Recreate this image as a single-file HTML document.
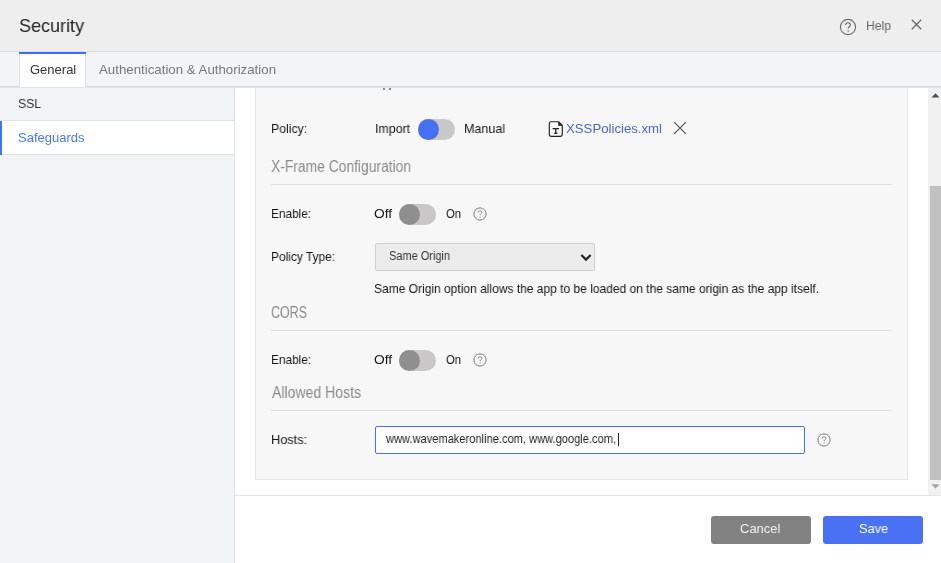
<!DOCTYPE html>
<html><head><meta charset="utf-8"><style>
html,body{margin:0;padding:0;width:941px;height:563px;overflow:hidden;background:#fff}
body{position:relative;font-family:"Liberation Sans",sans-serif}
.t{position:absolute;white-space:nowrap;transform-origin:0 0;will-change:transform}
</style></head><body>
<div style="position:absolute;left:0px;top:0px;width:941px;height:51px;background:#eeeeee"></div>
<div style="position:absolute;left:0px;top:51px;width:941px;height:1px;background:#dadada"></div>
<div id="security" class="t" style="left:19.000px;top:16px;font-size:19px;line-height:19px;color:#222;transform:scaleX(0.94732)">Security</div>
<svg style="position:absolute;left:838px;top:17px" width="20" height="20" viewBox="0 0 20 20"><circle cx="10" cy="10" r="7.6" fill="none" stroke="#6a6a6a" stroke-width="1.1"/><path d="M7.6 8.1 C7.6 6.6 8.7 5.7 10 5.7 C11.4 5.7 12.4 6.6 12.4 7.9 C12.4 9.4 10.2 9.7 10.2 11.6" fill="none" stroke="#6a6a6a" stroke-width="1.1"/><circle cx="10.2" cy="13.9" r="0.75" fill="#6a6a6a"/></svg>
<div id="help" class="t" style="left:866.000px;top:19px;font-size:13px;line-height:13px;color:#666;transform:scaleX(0.93672)">Help</div>
<svg style="position:absolute;left:911px;top:19px" width="11" height="11" viewBox="0 0 11 11"><path d="M0.8 0.8 L10.2 10.2 M10.2 0.8 L0.8 10.2" stroke="#666" stroke-width="1.3"/></svg>
<div style="position:absolute;left:0px;top:52px;width:941px;height:34px;background:#f3f4f6"></div>
<div style="position:absolute;left:0px;top:86px;width:941px;height:1px;background:#dadada"></div>
<div style="position:absolute;left:0px;top:87px;width:941px;height:1px;background:#e0e5e9"></div>
<div style="position:absolute;left:19px;top:52px;width:67px;height:35px;background:#fff;box-sizing:border-box;border-left:1px solid #e2e2e2;border-right:1px solid #e2e2e2"></div>
<div style="position:absolute;left:19px;top:52px;width:67px;height:2px;background:#3d6cf2"></div>
<div id="general" class="t" style="left:30.000px;top:63px;font-size:13px;line-height:13px;color:#333;transform:scaleX(0.99675)">General</div>
<div id="auth" class="t" style="left:99.000px;top:63px;font-size:13px;line-height:13px;color:#777;transform:scaleX(1.02056)">Authentication &amp; Authorization</div>
<div style="position:absolute;left:0px;top:88px;width:234px;height:475px;background:#f2f3f5"></div>
<div style="position:absolute;left:234px;top:88px;width:1px;height:475px;background:#dde2e6"></div>
<div style="position:absolute;left:0px;top:120px;width:234px;height:1px;background:#dde3e8"></div>
<div style="position:absolute;left:0px;top:121px;width:234px;height:33px;background:#fff"></div>
<div style="position:absolute;left:0px;top:154px;width:234px;height:1px;background:#dde3e8"></div>
<div style="position:absolute;left:0px;top:121px;width:2px;height:34px;background:#3e76f0"></div>
<div id="ssl" class="t" style="left:18.000px;top:97px;font-size:13px;line-height:13px;color:#333;transform:scaleX(0.93796)">SSL</div>
<div id="safeguards" class="t" style="left:18.000px;top:131px;font-size:13px;line-height:13px;color:#4a7af0;transform:scaleX(0.99291)">Safeguards</div>
<div style="position:absolute;left:235px;top:88px;width:706px;height:407px;background:#fff"></div>
<div style="position:absolute;left:255px;top:88px;width:653px;height:392px;background:#f7f7f7;box-sizing:border-box;border:1px solid #e6e6e6;border-top:none"></div>
<div style="position:absolute;left:383px;top:88px;width:2px;height:2px;background:#666;border-radius:1px"></div>
<div style="position:absolute;left:389px;top:88px;width:2px;height:2px;background:#666;border-radius:1px"></div>
<div id="policy" class="t" style="left:271.000px;top:122px;font-size:13px;line-height:13px;color:#161616;transform:scaleX(0.94348)">Policy:</div>
<div id="import" class="t" style="left:375.000px;top:122px;font-size:13px;line-height:13px;color:#161616;transform:scaleX(0.95091)">Import</div>
<div style="position:absolute;left:418px;top:119px;width:37px;height:21px;background:#c9c7c8;border-radius:11px"></div>
<div style="position:absolute;left:418px;top:119px;width:21px;height:21px;background:#4570f2;border-radius:50%"></div>
<div id="manual" class="t" style="left:464.000px;top:122px;font-size:13px;line-height:13px;color:#161616;transform:scaleX(0.96421)">Manual</div>
<svg style="position:absolute;left:548.4px;top:120px" width="16" height="18" viewBox="0 0 16 18"><path d="M3 1.7 H10.6 L14.3 5.4 V14.6 Q14.3 16.3 12.6 16.3 H3 Q1.3 16.3 1.3 14.6 V3.4 Q1.3 1.7 3 1.7 Z" fill="none" stroke="#222" stroke-width="1.15" stroke-linejoin="round"/><path d="M10.6 2 V5.4 H14" fill="#222" stroke="#222" stroke-width="0.8"/><path d="M4.6 8.6 H11 M7.8 8.6 V13.2 M6.2 13.3 H9.4" stroke="#222" stroke-width="1.3"/></svg>
<div id="xss" class="t" style="left:566.000px;top:122px;font-size:13px;line-height:13px;color:#4768c8;transform:scaleX(1.01485)">XSSPolicies.xml</div>
<svg style="position:absolute;left:673px;top:121px" width="14" height="14" viewBox="0 0 14 14"><path d="M1.2 1.2 L12.8 12.8 M12.8 1.2 L1.2 12.8" stroke="#555" stroke-width="1.2"/></svg>
<div id="xframe" class="t" style="left:271.000px;top:159px;font-size:16px;line-height:16px;color:#8a8a8a;transform:scaleX(0.86523)">X-Frame Configuration</div>
<div style="position:absolute;left:271px;top:184px;width:621px;height:1px;background:#e0e0e0"></div>
<div id="enable1" class="t" style="left:271.000px;top:207px;font-size:13px;line-height:13px;color:#161616;transform:scaleX(0.90979)">Enable:</div>
<div id="off1" class="t" style="left:374.000px;top:207px;font-size:13px;line-height:13px;color:#161616;transform:scaleX(1.05634)">Off</div>
<div id="on1" class="t" style="left:446.000px;top:207px;font-size:13px;line-height:13px;color:#161616;transform:scaleX(0.86945)">On</div>
<div style="position:absolute;left:399px;top:204px;width:37px;height:21px;background:#c9c7c8;border-radius:11px"></div>
<div style="position:absolute;left:399px;top:204px;width:21px;height:21px;background:#8f8f8f;border-radius:50%"></div>
<svg style="position:absolute;left:471.9px;top:206.4px" width="16" height="16" viewBox="0 0 16 16"><circle cx="8" cy="8" r="6.1" fill="none" stroke="#7a7a7a" stroke-width="1"/><path d="M6.1 6.6 C6.1 5.4 7 4.7 8 4.7 C9.1 4.7 9.9 5.4 9.9 6.4 C9.9 7.6 8.1 7.8 8.1 9.3" fill="none" stroke="#7a7a7a" stroke-width="0.95"/><circle cx="8.1" cy="11.1" r="0.6" fill="#7a7a7a"/></svg>
<div id="ptype" class="t" style="left:271.000px;top:250px;font-size:13px;line-height:13px;color:#161616;transform:scaleX(0.91725)">Policy Type:</div>
<div style="position:absolute;left:375px;top:243px;width:220px;height:28px;background:#ececec;box-sizing:border-box;border:1px solid #cfcfcf;border-radius:2px"></div>
<div id="selval" class="t" style="left:389.000px;top:250px;font-size:12px;line-height:12px;color:#333;transform:scaleX(0.91496)">Same Origin</div>
<svg style="position:absolute;left:580px;top:253px" width="12" height="9" viewBox="0 0 12 9"><path d="M1.4 2 L6 6.6 L10.6 2" fill="none" stroke="#222" stroke-width="2.2"/></svg>
<div id="desc" class="t" style="left:374.000px;top:282px;font-size:13px;line-height:13px;color:#161616;transform:scaleX(0.92328)">Same Origin option allows the app to be loaded on the same origin as the app itself.</div>
<div id="cors" class="t" style="left:271.000px;top:305px;font-size:16px;line-height:16px;color:#8a8a8a;transform:scaleX(0.77939)">CORS</div>
<div style="position:absolute;left:271px;top:330px;width:621px;height:1px;background:#e0e0e0"></div>
<div id="enable2" class="t" style="left:271.000px;top:353px;font-size:13px;line-height:13px;color:#161616;transform:scaleX(0.90979)">Enable:</div>
<div id="off2" class="t" style="left:374.000px;top:353px;font-size:13px;line-height:13px;color:#161616;transform:scaleX(1.05634)">Off</div>
<div id="on2" class="t" style="left:446.000px;top:353px;font-size:13px;line-height:13px;color:#161616;transform:scaleX(0.86945)">On</div>
<div style="position:absolute;left:399px;top:350px;width:37px;height:21px;background:#c9c7c8;border-radius:11px"></div>
<div style="position:absolute;left:399px;top:350px;width:21px;height:21px;background:#8f8f8f;border-radius:50%"></div>
<svg style="position:absolute;left:471.9px;top:352.4px" width="16" height="16" viewBox="0 0 16 16"><circle cx="8" cy="8" r="6.1" fill="none" stroke="#7a7a7a" stroke-width="1"/><path d="M6.1 6.6 C6.1 5.4 7 4.7 8 4.7 C9.1 4.7 9.9 5.4 9.9 6.4 C9.9 7.6 8.1 7.8 8.1 9.3" fill="none" stroke="#7a7a7a" stroke-width="0.95"/><circle cx="8.1" cy="11.1" r="0.6" fill="#7a7a7a"/></svg>
<div id="allowed" class="t" style="left:272.000px;top:385px;font-size:16px;line-height:16px;color:#8a8a8a;transform:scaleX(0.87795)">Allowed Hosts</div>
<div style="position:absolute;left:271px;top:410px;width:621px;height:1px;background:#e0e0e0"></div>
<div id="hosts" class="t" style="left:271.000px;top:433px;font-size:13px;line-height:13px;color:#161616;transform:scaleX(0.98057)">Hosts:</div>
<div style="position:absolute;left:375px;top:426px;width:430px;height:28px;background:#fff;box-sizing:border-box;border:1px solid #4b72e0;border-radius:2px"></div>
<div id="hostval" class="t" style="left:386.000px;top:433px;font-size:12px;line-height:12px;color:#222;transform:scaleX(0.92462)">www.wavemakeronline.com, www.google.com,</div>
<div style="position:absolute;left:618px;top:433px;width:1px;height:13px;background:#222"></div>
<svg style="position:absolute;left:815.8px;top:431.7px" width="16" height="16" viewBox="0 0 16 16"><circle cx="8" cy="8" r="6.1" fill="none" stroke="#7a7a7a" stroke-width="1"/><path d="M6.1 6.6 C6.1 5.4 7 4.7 8 4.7 C9.1 4.7 9.9 5.4 9.9 6.4 C9.9 7.6 8.1 7.8 8.1 9.3" fill="none" stroke="#7a7a7a" stroke-width="0.95"/><circle cx="8.1" cy="11.1" r="0.6" fill="#7a7a7a"/></svg>
<div style="position:absolute;left:928px;top:88px;width:13px;height:407px;background:#f1f1f1"></div>
<div style="position:absolute;left:930px;top:186px;width:11px;height:294px;background:#c1c1c1"></div>
<svg style="position:absolute;left:931px;top:92px" width="9" height="7" viewBox="0 0 9 7"><path d="M0.5 5.6 L4.5 1.2 L8.5 5.6 Z" fill="#505050"/></svg>
<svg style="position:absolute;left:931px;top:483px" width="9" height="7" viewBox="0 0 9 7"><path d="M0.5 1.2 L4.5 5.6 L8.5 1.2 Z" fill="#a3a3a3"/></svg>
<div style="position:absolute;left:235px;top:495px;width:706px;height:1px;background:#dfe5e8"></div>
<div style="position:absolute;left:235px;top:496px;width:706px;height:67px;background:#fff"></div>
<div style="position:absolute;left:711px;top:516px;width:100px;height:28px;background:#828282;border-radius:3px"></div>
<div id="cancel" class="t" style="left:740.000px;top:522px;font-size:13px;line-height:13px;color:#efefef;transform:scaleX(0.99116)">Cancel</div>
<div style="position:absolute;left:823px;top:516px;width:100px;height:28px;background:#4a71f3;border-radius:3px"></div>
<div id="save" class="t" style="left:859.000px;top:522px;font-size:13px;line-height:13px;color:#ffffff;transform:scaleX(0.97999)">Save</div>
</body></html>
